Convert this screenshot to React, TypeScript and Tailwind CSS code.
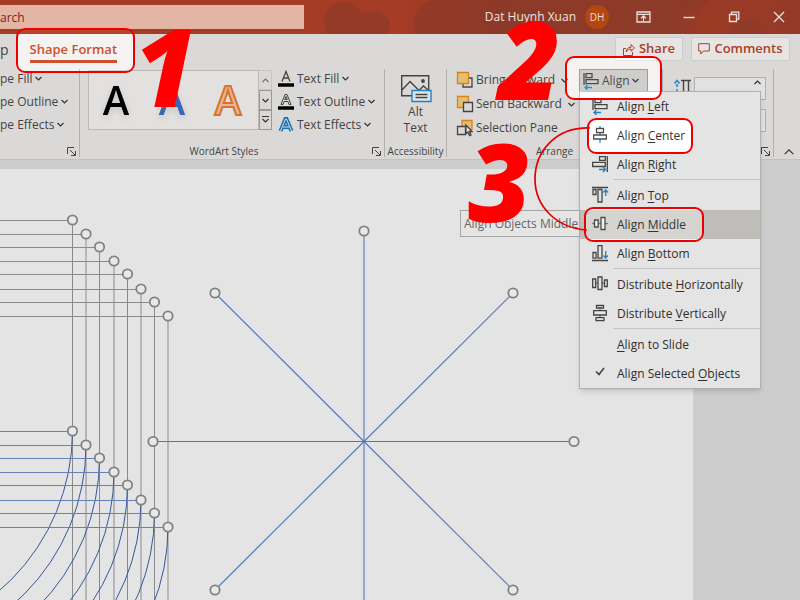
import React from "react";

type IconProps = { children: React.ReactNode; size?: number };

function Icon({ children, size = 18 }: IconProps) {
  return (
    <svg width={size} height={size} viewBox={`0 0 ${size} ${size}`} fill="none" stroke="#444" strokeWidth="1.3" className="shrink-0" aria-hidden="true">
      {children}
    </svg>
  );
}

function Chevron({ up = false, wide = false }: { up?: boolean; wide?: boolean }) {
  return (
    <svg width={wide ? 10 : 7} height={wide ? 10 : 7} viewBox="0 0 7 7" fill="none" stroke="#333" strokeWidth={wide ? 0.9 : 1.2} className="shrink-0" aria-hidden="true">
      <path d={up ? "M.5 5 3.5 2l3 3" : "M.5 2 3.5 5l3-3"} />
    </svg>
  );
}

function Launcher() {
  return (
    <button aria-label="More options" className="absolute right-[3px] bottom-0 h-[12px] w-[9px]">
      <svg width="9" height="9" viewBox="0 0 9 9" fill="none" stroke="#444" aria-hidden="true">
        <path d="M.5 7V.5H7M3 3l5 5M8.500 4v4.500H4" />
      </svg>
    </button>
  );
}

function Group({ label, launcher, className, children }: { label: string; launcher?: boolean; className: string; children: React.ReactNode }) {
  return (
    <section aria-label={label || "Shape Styles"} className={`relative flex h-[88px] shrink-0 flex-col border-r border-[#b3b1af] ${className}`}>
      <div className="flex flex-1">{children}</div>
      <div className="h-[12px] text-center text-[10px] leading-[12px] whitespace-nowrap">{label}</div>
      {launcher && <Launcher />}
    </section>
  );
}

const icons: Record<string, React.ReactNode> = {
  left: (
    <>
      <path d="M2 1v12M4 1.700h6v4H4zM4 7.700h12v4H4z" />
      <path d="M3 15.500h7M5.500 13l-2.500 2.500L5.500 18" stroke="#1f82c4" />
    </>
  ),
  center: (
    <>
      <path d="M9 0v17" stroke="#1f82c4" />
      <path fill="#eee" d="M5.500 2.500h7v4h-7zM2.700 9h12.600v4H2.700z" />
    </>
  ),
  right: (
    <>
      <path d="M16.300 1v16M8.500 1.700h5.800v3.600H8.500zM1.700 7.300h12.600v4.200H1.700z" />
      <path d="M8 14.500h6.500M12 12l2.500 2.500L12 17" stroke="#1f82c4" />
    </>
  ),
  top: (
    <>
      <path d="M1 1.500h16M2 3.500h3v5H2zM7 3.500h4v12.500H7z" />
      <path d="M14.700 10V4M12.200 6.500l2.500-2.500 2.500 2.500" stroke="#1f82c4" />
    </>
  ),
  middle: (
    <>
      <path d="M1 8.500h16" stroke="#1f82c4" />
      <path fill="#d8d6d3" d="M3.500 5h3.700v7H3.500zM10 2.500h4v12h-4z" />
    </>
  ),
  bottom: (
    <>
      <path d="M1 16.500h16M2 8.500h3v5.700H2zM7 1.700h4v12.500H7z" />
      <path d="M14.700 7v7M12.500 11.500l2.200 2.500 2.200-2.500" stroke="#1f82c4" />
    </>
  ),
  horizontal: (
    <>
      <path d="M4 8h11" stroke="#1f82c4" />
      <path fill="#e4e4e4" d="M1.700 4h3v8.500h-3zM7 2h4v12.500H7zM13.500 5h2.800v6.500h-2.800z" />
    </>
  ),
  vertical: (
    <>
      <path d="M9 3v12" stroke="#1f82c4" />
      <path fill="#e4e4e4" d="M5.500 1.500h7v2.500h-7zM2.700 6.700h12.600V11H2.700zM5 13.700h8v3H5z" />
    </>
  ),
  check: <path d="M5 7.500l3 3L13 4" strokeWidth="1.700" />,
};

type Item = { icon?: string; before: string; key: string; after: string; rule?: boolean; active?: boolean };

const items: Item[] = [
  { icon: "left", before: "Align ", key: "L", after: "eft" },
  { icon: "center", before: "Align ", key: "C", after: "enter" },
  { icon: "right", before: "Align ", key: "R", after: "ight" },
  { icon: "top", before: "Align ", key: "T", after: "op", rule: true },
  { icon: "middle", before: "Align ", key: "M", after: "iddle", active: true },
  { icon: "bottom", before: "Align ", key: "B", after: "ottom" },
  { icon: "horizontal", before: "Distribute ", key: "H", after: "orizontally", rule: true },
  { icon: "vertical", before: "Distribute ", key: "V", after: "ertically" },
  { before: "", key: "A", after: "lign to Slide", rule: true },
  { icon: "check", before: "Align Selected ", key: "O", after: "bjects" },
];

function AlignMenu() {
  return (
    <div role="menu" className="absolute top-[22px] left-0 z-10 w-[182px] border border-[#b0b0b0] bg-[#e4e4e4] text-[12px] text-[#2f2f2f] shadow-md">
      {items.map((it) => (
        <React.Fragment key={it.before + it.key}>
          {it.rule && <div role="separator" className="ml-[33px] h-[2px] border-t border-[#c4c4c4]" />}
          <button role="menuitem" className={`flex h-[29px] w-full items-center gap-[8px] pl-[11px] text-left whitespace-nowrap ${it.active ? "bg-[#bfbdba]" : ""}`}>
            <span className="h-[20px] w-[18px]">{it.icon && <Icon>{icons[it.icon]}</Icon>}</span>
            <span>
              {it.before}
              <u className="underline-offset-2">{it.key}</u>
              {it.after}
            </span>
          </button>
        </React.Fragment>
      ))}
    </div>
  );
}

function TitleBar() {
  return (
    <header className="relative flex h-[34px] items-center bg-[#a53c26] text-white">
      <svg className="absolute inset-0 h-full w-full" aria-hidden="true">
        <defs>
          <linearGradient id="bar" x1="0" x2="1">
            <stop offset="0.5" stopColor="#8d3a29" stopOpacity="0" />
            <stop offset="0.64" stopColor="#8d3a29" />
            <stop offset="0.84" stopColor="#8d3a29" />
            <stop offset="0.88" stopColor="#9b3a25" />
            <stop offset="1" stopColor="#953a28" />
          </linearGradient>
        </defs>
        <rect width="100%" height="100%" fill="url(#bar)" />
        <path
          d="M327 34C320 16 328 3 342 2c10-1 17 5 20 12 10-5 25-2 28 8 1 5-1 9-4 12zM416 34c-6-14 0-30 16-34h80v34zM676 0c3 14 24 16 33 0zM733 34c0-16 24-22 30 0z"
          fill="#8d3928"
          opacity="0.7"
        />
      </svg>
      <input aria-label="Search" defaultValue="arch" className="relative h-[24px] w-[304px] bg-[#e3b5a4] text-[12px] text-[#7a2418] outline-none" />
      <div className="relative ml-auto flex items-center">
        <span className="text-[12px] whitespace-nowrap text-[#efe3e0]">Dat Huynh Xuan</span>
        <button aria-label="Account" className="ml-[9px] size-[24px] rounded-full bg-[#b4460f] text-[10px] text-[#f0d9cc]">DH</button>
        <div className="ml-[27px] flex items-center gap-[31px] pr-[14px]">
          <button aria-label="Ribbon display options">
            <svg width="15" height="12" viewBox="0 0 15 12" fill="none" stroke="#eadfdc" strokeWidth="1.300" className="block">
              <path d="M1 1h13v10H1zM1 3.300h13M7.500 10V5M5 7.200l2.500-2.400L10 7.200" />
            </svg>
          </button>
          <button aria-label="Minimize">
            <svg width="14" height="12" viewBox="0 0 14 12" stroke="#eadfdc" strokeWidth="1.400" className="block">
              <path d="M1.500 6.500h11" />
            </svg>
          </button>
          <button aria-label="Restore">
            <svg width="14" height="12" viewBox="0 0 14 12" fill="none" stroke="#eadfdc" strokeWidth="1.300" className="block">
              <path d="M2.500 3.500h7v7h-7zM4.500 3.500V1.200h7.300v7H9.500" />
            </svg>
          </button>
          <button aria-label="Close">
            <svg width="14" height="12" viewBox="0 0 14 12" stroke="#eadfdc" strokeWidth="1.400" className="block">
              <path d="M2 1l10 10M12 1 2 11" />
            </svg>
          </button>
        </div>
      </div>
    </header>
  );
}

function TabRow() {
  return (
    <nav className="flex h-[35px] items-start pt-[3px] pr-[10px] text-[13px] text-[#444]">
      <button className="h-[24px] text-[14px]">p</button>
      <button className="ml-[21px] h-[26px] border-b-[3px] border-[#b7472a] pt-[2px] font-semibold whitespace-nowrap text-[#b7472a]">Shape Format</button>
      <div className="ml-auto flex gap-[8px] font-semibold text-[#a8402a]">
        <button className="flex h-[24px] w-[68px] items-center justify-center gap-[4px] rounded-[2px] border border-[#cfcdcb] bg-[#e6e5e3]">
          <svg width="12" height="13" viewBox="0 0 12 13" fill="none" stroke="#a8402a" className="shrink-0" aria-hidden="true">
            <path d="M3 5.500H.5v7h9V9M3 9c.3-3 2-4.700 5-4.700V1.500L11.500 5 8 8.200V6C6 6 4.500 7 3 9z" />
          </svg>
          Share
        </button>
        <button className="flex h-[24px] w-[99px] items-center justify-center gap-[4px] rounded-[2px] border border-[#cfcdcb] bg-[#e6e5e3]">
          <svg width="12" height="12" viewBox="0 0 12 12" fill="none" stroke="#a8402a" className="shrink-0" aria-hidden="true">
            <path d="M.7.700h10.600v7.300H5.500L2.700 11V8h-2z" />
          </svg>
          Comments
        </button>
      </div>
    </nav>
  );
}

const textRow = "flex h-[23px] items-center gap-[3px] whitespace-nowrap";
const arrangeRow = "flex h-[24px] items-center gap-[2px] whitespace-nowrap";

function Ribbon() {
  return (
    <div className="flex h-[91px] items-start border-b border-[#c2c1bf] text-[12px] text-[#444]">
      <Group label="" launcher className="w-[80px]">
        <div className="-mt-[2px]">
          <button className={textRow}>pe Fill<Chevron /></button>
          <button className={textRow}>pe Outline<Chevron /></button>
          <button className={textRow}>pe Effects<Chevron /></button>
        </div>
      </Group>

      <Group label="WordArt Styles" launcher className="w-[305px] pr-[16px]">
        <div className="mt-[1px] ml-[8px] flex h-[60px] w-[171px] shrink-0 items-center border border-[#bcbab8] bg-[#e2e1e0] text-[40px] leading-none font-semibold">
          <button className="w-[54px] text-black drop-shadow-md">A</button>
          <button className="w-[58px] text-[#3a66b4] drop-shadow-md">A</button>
          <button className="w-[54px] text-[#e5b799] [-webkit-text-stroke:2px_#d9722b]">A</button>
        </div>
        <div className="mt-[1px] flex w-[13px] shrink-0 flex-col">
          <button aria-label="Previous styles" className="flex h-[20px] items-center justify-center border border-l-0 border-[#bcbab8] opacity-60"><Chevron up /></button>
          <button aria-label="Next styles" className="flex h-[20px] items-center justify-center border border-[#9b9997]"><Chevron /></button>
          <button aria-label="All styles" className="flex h-[20px] flex-col items-center justify-center border border-[#9b9997]">
            <span className="w-[7px] border-t border-[#333]" />
            <Chevron />
          </button>
        </div>
        <div className="-mt-[2px] ml-[6px]">
          <button className={textRow}>
            <svg width="16" height="18" viewBox="0 0 16 18" fill="none" stroke="#444" strokeWidth="1.300" aria-hidden="true"><path d="M4 11.500 8 1.500l4 10M5.500 8h5" /><path d="M0 15h16" stroke="#000" strokeWidth="3.500" /></svg>
            Text Fill<Chevron />
          </button>
          <button className={textRow}>
            <svg width="16" height="18" viewBox="0 0 16 18" fill="none" stroke="#444" aria-hidden="true"><path d="M3 11.500 7 1.500h2l4 10h-2l-1-3H6l-1 3zM6.700 6.500 8 3.500l1.300 3z" /><path d="M0 15h16" stroke="#000" strokeWidth="3.500" /></svg>
            Text Outline<Chevron />
          </button>
          <button className={textRow}>
            <svg width="16" height="18" viewBox="0 0 16 18" fill="none" aria-hidden="true"><path d="M2.500 15 7.500 3h1l5 12M5 11h6.500" stroke="#1b6fb3" strokeWidth="4" /><path d="M2.500 15 7.500 3h1l5 12M5 11h6.500" stroke="#cfe0ee" strokeWidth="1" /></svg>
            Text Effects<Chevron />
          </button>
        </div>
      </Group>

      <Group label="Accessibility" className="w-[62px]">
        <button className="flex flex-1 flex-col items-center pt-[5px] leading-[16px]">
          <svg width="32" height="30" viewBox="0 0 32 30" fill="none" stroke="#444" strokeWidth="1.400" className="shrink-0" aria-hidden="true">
            <path d="M1.700 1.700h27v20h-27zM2 16l8-8.500 9 9 4.500-4.500 5 4.500" />
            <circle cx="23" cy="7" r="1.200" fill="#444" />
            <path d="M12 16.500h19v11H12z" fill="#e3e3e3" stroke="#2483c5" />
            <path d="M15.500 20.500h12M15.500 23.500h12" />
          </svg>
          Alt
          <br />
          Text
        </button>
      </Group>

      <Group label="Arrange" className="w-[216px]">
        <div className="-mt-[1px] ml-[9px]">
          <button className={arrangeRow}>
            <Icon><path d="M13 7h3v9H7v-3" /><path d="M1.500 1.500h11v11h-11z" fill="#e3bf76" stroke="#d9801f" /></Icon>
            Bring Forward<span className="ml-[4px] flex"><Chevron /></span>
          </button>
          <button className={arrangeRow}>
            <Icon><path d="M1.500 1.500h11v11h-11z" fill="#e3bf76" stroke="#d9801f" /><path d="M7.500 7.500h9v9h-9z" fill="#dad9d7" /></Icon>
            Send Backward<span className="ml-[4px] flex"><Chevron /></span>
          </button>
          <button className={arrangeRow}>
            <Icon><path d="M6 1.500h10v9H6z" fill="#e3bf76" stroke="#d9801f" /><path d="M1.500 7.500h8v8h-8z" fill="#dad9d7" /><path d="m10 6 6 6.500h-2.500l1.500 3.500-1.500.600-1.500-3.500-2 1.500z" fill="#eee" /></Icon>
            Selection Pane
          </button>
        </div>
        <div className="absolute top-0 left-[132px] z-10">
          <button aria-haspopup="menu" className="flex h-[23px] w-[69px] items-center gap-[2px] border border-[#8d8b89] bg-[#b9b8b6] pl-[2px] whitespace-nowrap">
            <Icon>{icons.left}</Icon>Align<Chevron />
          </button>
          <AlignMenu />
        </div>
      </Group>

      <Group label="" launcher className="w-[111px]">
        <div className="ml-[11px] flex gap-[3px] pt-[8px]">
          <svg width="17" height="20" viewBox="0 0 17 20" fill="none" stroke="#444" aria-hidden="true">
            <path d="M3 20V5" stroke="#1f82c4" strokeWidth="1.500" strokeDasharray="3 2" />
            <path d="M.5 6.500 3 3.500l2.500 3" stroke="#1f82c4" strokeWidth="1.500" />
            <path d="M7 3.500h10M9.500 4v16M14.500 4v16" strokeWidth="1.400" />
          </svg>
          <div className="flex flex-col gap-[9px]">
            <label className="relative block">
              <input aria-label="Height" className="block h-[23px] w-[72px] border border-[#b3b1af] bg-[#e2e1e0]" />
              <span className="absolute top-[2px] right-[5px]"><Chevron up /></span>
            </label>
            <input aria-label="Width" className="block h-[23px] w-[72px] border border-[#b3b1af] bg-[#e2e1e0]" />
          </div>
        </div>
      </Group>
      <button aria-label="Collapse ribbon" className="ml-auto self-end pr-[6px] pb-[2px]"><Chevron up wide /></button>
    </div>
  );
}

const nodes: [number, number][] = [[72.5, 220], [86, 234], [99.5, 247], [114, 261], [127.5, 274], [141, 289], [154.5, 302], [168, 316]];
const spokes: [number, number][] = [[364, 231], [513, 293], [574, 441.5], [513, 590], [364, 652], [215, 590], [153, 441.5], [215, 293]];

function Knob({ x, y }: { x: number; y: number }) {
  return <circle cx={x} cy={y} r="4.700" fill="#e8e8e8" stroke="#828282" strokeWidth="1.800" />;
}

function Slide() {
  return (
    <main className="flex flex-1 bg-[#cdcdcd] pt-[9px]">
      <div className="relative flex-1 overflow-hidden bg-[#e4e4e4]">
        <svg className="absolute inset-0 h-full w-full" fill="none" aria-label="Shapes on the slide">
          <g transform="translate(0 -169)">
            {spokes.map(([x, y]) => <path key={`${x},${y}`} d={`M364 441.500 ${x} ${y}`} stroke="#4f78c0" strokeWidth="1.100" />)}
            {nodes.map(([x, y]) => <path key={x} d={`M0 ${y + 0.5}H${x}V700`} stroke="#8b8b8b" />)}
            {nodes.map(([x, y]) => (
              <g key={x}>
                <path d={`M0 ${y + 211.500}H${x}`} stroke="#6582b8" strokeWidth="1.200" />
                <path d={`M${x} ${y + 211}a211 211 0 0 1-211 211`} stroke="#35569b" />
              </g>
            ))}
            {nodes.map(([x, y]) => (
              <g key={x}>
                <Knob x={x} y={y} />
                <Knob x={x} y={y + 211} />
              </g>
            ))}
            {spokes.map(([x, y]) => <Knob key={`${x},${y}`} x={x} y={y} />)}
          </g>
        </svg>
      </div>
      <div className="w-[107px] shrink-0" />
    </main>
  );
}

const ring = "absolute rounded-[9px] border-2 border-[#ee0000] backdrop-brightness-[1.12]";
const digit = "absolute text-[108px] leading-none font-extrabold italic text-[#ff0000]";

function Callouts() {
  return (
    <div className="pointer-events-none absolute inset-0 z-20">
      <div className="absolute top-[210px] left-[460px] flex h-[27px] w-[120px] items-center border border-[#a5a5a5] bg-[#e5e5e5] pl-[3px] text-[12px] whitespace-nowrap text-[#666]">Align Objects Middle</div>
      <svg className="absolute top-0 left-0 h-full w-full" fill="none" stroke="#e60000" strokeWidth="1.700" aria-hidden="true">
        <path d="M590 128C556 127 535 151 535 179s22 49 52 51" />
      </svg>
      <div className={`${ring} top-[28px] left-[16px] h-[45px] w-[119px]`} />
      <div className={`${ring} top-[56px] left-[565px] h-[44px] w-[97px]`} />
      <div className={`${ring} top-[118px] left-[587px] h-[36px] w-[106px]`} />
      <div className={`${ring} top-[207px] left-[584px] h-[35px] w-[120px]`} />
      <span className={`${digit} top-[12px] left-[134px]`}>1</span>
      <span className={`${digit} top-[5px] left-[498px]`}>2</span>
      <span className={`${digit} top-[127px] left-[468px]`}>3</span>
    </div>
  );
}

export default function App() {
  return (
    <div className="relative flex min-h-screen flex-col bg-[#dad9d7] font-['Open_Sans','Noto_Sans',sans-serif]">
      <TitleBar />
      <TabRow />
      <Ribbon />
      <Slide />
      <Callouts />
    </div>
  );
}
